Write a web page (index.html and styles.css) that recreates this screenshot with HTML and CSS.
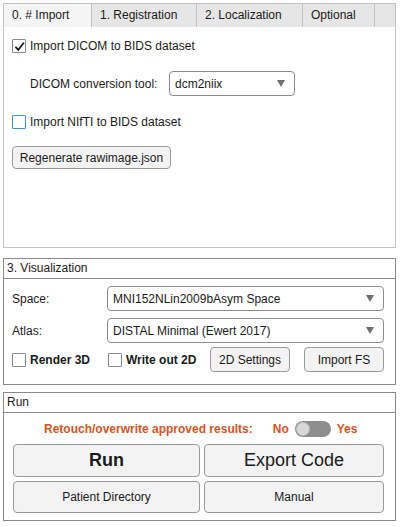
FILE: index.html
```html
<!DOCTYPE html>
<html>
<head>
<meta charset="utf-8">
<link rel="stylesheet" href="styles.css">
</head>
<body>
<div class="app">
  <div class="tabgroup">
    <div class="tabbar">
      <div class="tab sel t0">0. # Import</div>
      <div class="tab t1">1. Registration</div>
      <div class="tab t2">2. Localization</div>
      <div class="tab t3">Optional</div>
      <div class="tab filler"></div>
    </div>
    <div class="tabbody">
      <div class="chkrow r1"><span class="cb checked"><svg width="11" height="11" viewBox="0 0 11 11"><path d="M1.5 5.8 L4.3 8.8 L9.8 1.8" fill="none" stroke="#1a1a1a" stroke-width="1.8"/></svg></span><span>Import DICOM to BIDS dataset</span></div>
      <div class="ddrow">
        <span class="ddlabel">DICOM conversion tool:</span>
        <div class="dd dd1"><span>dcm2niix</span><span class="tri"></span></div>
      </div>
      <div class="chkrow r3"><span class="cb blue"></span><span>Import NIfTI to BIDS dataset</span></div>
      <div class="btn regen">Regenerate rawimage.json</div>
    </div>
  </div>

  <div class="panel vis">
    <div class="ptitle">3. Visualization</div>
    <div class="pbody vbody">
      <div class="vrow">
        <span class="vlabel">Space:</span>
        <div class="dd dd2"><span>MNI152NLin2009bAsym Space</span><span class="tri"></span></div>
      </div>
      <div class="vrow">
        <span class="vlabel">Atlas:</span>
        <div class="dd dd2"><span>DISTAL Minimal (Ewert 2017)</span><span class="tri"></span></div>
      </div>
      <div class="vrow3">
        <div class="chkrow bold c3d"><span class="cb"></span><span>Render 3D</span></div>
        <div class="chkrow bold c2d"><span class="cb"></span><span>Write out 2D</span></div>
        <div class="btn small b2d">2D Settings</div>
        <div class="btn small bfs">Import FS</div>
      </div>
    </div>
  </div>

  <div class="panel run">
    <div class="ptitle">Run</div>
    <div class="pbody rbody">
      <div class="retouch">
        <span class="rt">Retouch/overwrite approved results:</span>
        <span class="no">No</span>
        <span class="toggle"><span class="knob"></span></span>
        <span class="yes">Yes</span>
      </div>
      <div class="rgrid">
        <div class="btn big runbtn">Run</div>
        <div class="btn big exp">Export Code</div>
        <div class="btn mid">Patient Directory</div>
        <div class="btn mid">Manual</div>
      </div>
    </div>
  </div>
</div>
</body>
</html>
```

FILE: styles.css
```css
* { box-sizing: border-box; }
html, body { margin: 0; padding: 0; background: #fff; }
body {
  font-family: "Liberation Sans", Arial, sans-serif;
  font-size: 12px;
  color: #1a1a1a;
}
.app {
  width: 403px;
  height: 527px;
  padding: 3px 0 0 3px;
}
.tabgroup {
  width: 393px;
  height: 245px;
  border: 1px solid #c2c2c2;
  border-top: none;
  display: flex;
  flex-direction: column;
}
.tabbar {
  display: flex;
  height: 24px;
  border-top: 1px solid #c2c2c2;
  margin-left: -1px;
  margin-right: -1px;
}
.tab {
  height: 24px;
  line-height: 22px;
  padding-left: 8px;
  background: #e6e6e6;
  border-left: 1px solid #c2c2c2;
  border-bottom: 1px solid #c2c2c2;
  font-size: 12px;
  color: #1a1a1a;
}
.tab.sel { background: #f5f5f5; border-bottom-color: #e0e0e0; }
.t0 { width: 88px; }
.t1 { width: 105px; }
.t2 { width: 106px; }
.t3 { width: 72px; }
.filler { width: 22px; border-right: 1px solid #c2c2c2; }
.tabbody {
  flex: 1;
  background: #fff;
  padding: 0 0 0 8px;
}
.chkrow {
  display: flex;
  align-items: center;
  gap: 4px;
  height: 16px;
}
.r1 { margin-top: 11px; }
.cb {
  width: 14px;
  height: 14px;
  border: 1px solid #8a8a8a;
  border-radius: 1px;
  background: #fff;
  display: flex;
  align-items: center;
  justify-content: center;
  flex: none;
}
.cb.checked svg { display: block; }
.cb.blue { border-color: #3d8ee0; border-width: 1.5px; }
.ddrow {
  display: flex;
  align-items: center;
  margin-top: 17px;
  padding-left: 18px;
  height: 25px;
}
.ddlabel { width: 141px; }
.dd {
  height: 25px;
  border: 1px solid #8c8c8c;
  border-radius: 4px;
  background: #fff;
  display: flex;
  align-items: center;
  justify-content: space-between;
  padding: 0 9px 0 5px;
}
.dd1 { width: 126px; font-size: 12px; margin-left: -2px; }
.tri {
  width: 0; height: 0;
  border-left: 4px solid transparent;
  border-right: 4px solid transparent;
  border-top: 7px solid #707070;
}
.r3 { margin-top: 18px; }
.btn {
  background: #f3f3f3;
  border: 1px solid #9a9a9a;
  border-radius: 4px;
  display: flex;
  align-items: center;
  justify-content: center;
  color: #1a1a1a;
}
.regen {
  width: 159px;
  height: 23px;
  margin-top: 16px;
}
.panel {
  width: 393px;
  border: 1px solid #8a8a8a;
  background: #fff;
}
.ptitle {
  height: 20px;
  line-height: 19px;
  padding-left: 3px;
  border-bottom: 1px solid #8a8a8a;
  font-size: 12px;
}
.vis { margin-top: 10px; height: 127px; }
.vbody { padding: 7px 0 0 8px; }
.vrow {
  display: flex;
  align-items: center;
  height: 25px;
  margin-bottom: 7px;
}
.vlabel { width: 95px; }
.dd2 { width: 277px; }
.vrow3 {
  display: flex;
  align-items: center;
  height: 25px;
  margin-top: -3px;
}
.bold { font-weight: bold; }
.c3d { width: 96px; }
.c2d { width: 102px; }
.small { height: 25px; }
.b2d { width: 80px; }
.bfs { width: 80px; margin-left: 14px; }
.run { margin-top: 7px; height: 129px; }
.rbody { padding: 0 11px 0 9px; }
.retouch {
  display: flex;
  align-items: center;
  height: 31px;
  padding-left: 31px;
  color: #d9531e;
  font-weight: bold;
  font-size: 12px;
}
.no { margin-left: 20px; }
.toggle {
  width: 36px;
  height: 16px;
  border-radius: 8px;
  background: #8e8e8e;
  margin-left: 6px;
  margin-right: 6px;
  position: relative;
  display: inline-block;
}
.knob {
  position: absolute;
  left: 1px; top: 1px;
  width: 14px; height: 14px;
  border-radius: 50%;
  background: #d8d8d8;
  border: 1px solid #bdbdbd;
}
.rgrid {
  display: grid;
  grid-template-columns: 187px 180px;
  grid-template-rows: 33px 32px;
  column-gap: 4px;
  row-gap: 4px;
}
.big { font-size: 18px; }
.runbtn { font-weight: bold; }
.mid { font-size: 12px; }
```
